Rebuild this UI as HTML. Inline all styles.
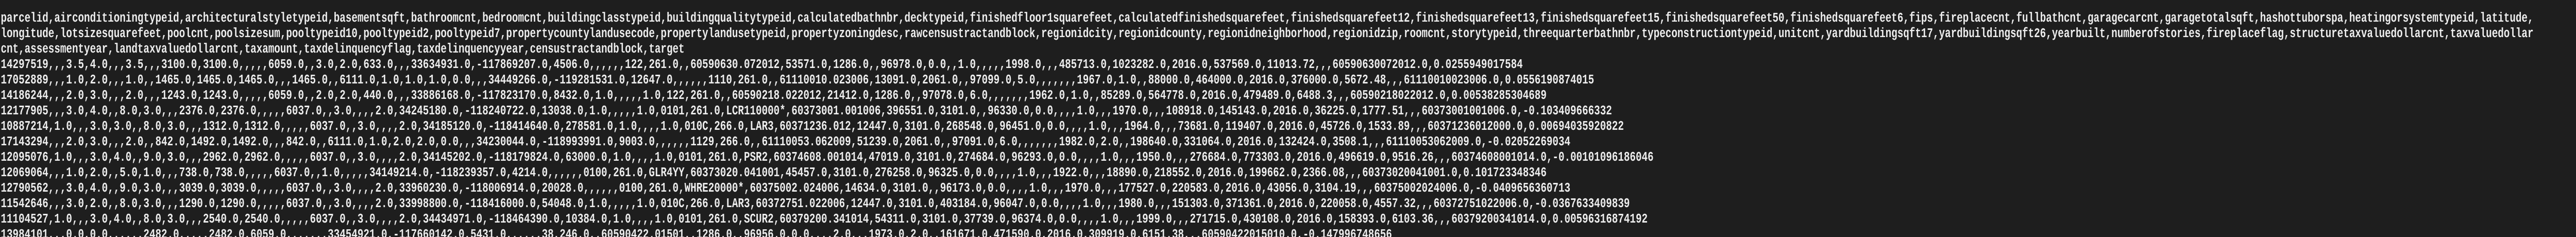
<!DOCTYPE html>
<html><head><meta charset="utf-8"><style>
html,body{margin:0;padding:0;background:#1e1e1e;overflow:hidden;}
body{width:6666px;height:460px;overflow:hidden;position:relative;}
svg{display:block;position:absolute;left:0;top:0;transform:scaleX(0.74);transform-origin:0 0;}
text{font-family:"Liberation Mono","DejaVu Sans Mono",monospace;font-size:26px;font-weight:bold;fill:#eeeeee;}
</style></head><body>
<svg width="9000" height="460" viewBox="0 0 9000 460" xmlns="http://www.w3.org/2000/svg">
<text x="2" y="42">parcelid,airconditioningtypeid,architecturalstyletypeid,basementsqft,bathroomcnt,bedroomcnt,buildingclasstypeid,buildingqualitytypeid,calculatedbathnbr,decktypeid,finishedfloor1squarefeet,calculatedfinishedsquarefeet,finishedsquarefeet12,finishedsquarefeet13,finishedsquarefeet15,finishedsquarefeet50,finishedsquarefeet6,fips,fireplacecnt,fullbathcnt,garagecarcnt,garagetotalsqft,hashottuborspa,heatingorsystemtypeid,latitude,</text>
<text x="2" y="72">longitude,lotsizesquarefeet,poolcnt,poolsizesum,pooltypeid10,pooltypeid2,pooltypeid7,propertycountylandusecode,propertylandusetypeid,propertyzoningdesc,rawcensustractandblock,regionidcity,regionidcounty,regionidneighborhood,regionidzip,roomcnt,storytypeid,threequarterbathnbr,typeconstructiontypeid,unitcnt,yardbuildingsqft17,yardbuildingsqft26,yearbuilt,numberofstories,fireplaceflag,structuretaxvaluedollarcnt,taxvaluedollar</text>
<text x="2" y="102">cnt,assessmentyear,landtaxvaluedollarcnt,taxamount,taxdelinquencyflag,taxdelinquencyyear,censustractandblock,target</text>
<text x="2" y="132">14297519,,,3.5,4.0,,,3.5,,,3100.0,3100.0,,,,,6059.0,,3.0,2.0,633.0,,,33634931.0,-117869207.0,4506.0,,,,,,122,261.0,,60590630.072012,53571.0,1286.0,,96978.0,0.0,,1.0,,,,,1998.0,,,485713.0,1023282.0,2016.0,537569.0,11013.72,,,60590630072012.0,0.0255949017584</text>
<text x="2" y="162">17052889,,,1.0,2.0,,,1.0,,1465.0,1465.0,1465.0,,,1465.0,,6111.0,1.0,1.0,1.0,0.0,,,34449266.0,-119281531.0,12647.0,,,,,,1110,261.0,,61110010.023006,13091.0,2061.0,,97099.0,5.0,,,,,,,1967.0,1.0,,88000.0,464000.0,2016.0,376000.0,5672.48,,,61110010023006.0,0.0556190874015</text>
<text x="2" y="192">14186244,,,2.0,3.0,,,2.0,,,1243.0,1243.0,,,,,6059.0,,2.0,2.0,440.0,,,33886168.0,-117823170.0,8432.0,1.0,,,,,1.0,122,261.0,,60590218.022012,21412.0,1286.0,,97078.0,6.0,,,,,,,1962.0,1.0,,85289.0,564778.0,2016.0,479489.0,6488.3,,,60590218022012.0,0.00538285304689</text>
<text x="2" y="222">12177905,,,3.0,4.0,,8.0,3.0,,,2376.0,2376.0,,,,,6037.0,,3.0,,,,2.0,34245180.0,-118240722.0,13038.0,1.0,,,,,1.0,0101,261.0,LCR110000*,60373001.001006,396551.0,3101.0,,96330.0,0.0,,,,1.0,,,1970.0,,,108918.0,145143.0,2016.0,36225.0,1777.51,,,60373001001006.0,-0.103409666332</text>
<text x="2" y="252">10887214,1.0,,,3.0,3.0,,8.0,3.0,,,1312.0,1312.0,,,,,6037.0,,3.0,,,,2.0,34185120.0,-118414640.0,278581.0,1.0,,,,1.0,010C,266.0,LAR3,60371236.012,12447.0,3101.0,268548.0,96451.0,0.0,,,,1.0,,,1964.0,,,73681.0,119407.0,2016.0,45726.0,1533.89,,,60371236012000.0,0.00694035920822</text>
<text x="2" y="282">17143294,,,2.0,3.0,,,2.0,,842.0,1492.0,1492.0,,,842.0,,6111.0,1.0,2.0,2.0,0.0,,,34230044.0,-118993991.0,9003.0,,,,,,1129,266.0,,61110053.062009,51239.0,2061.0,,97091.0,6.0,,,,,,,1982.0,2.0,,198640.0,331064.0,2016.0,132424.0,3508.1,,,61110053062009.0,-0.02052269034</text>
<text x="2" y="312">12095076,1.0,,,3.0,4.0,,9.0,3.0,,,2962.0,2962.0,,,,,6037.0,,3.0,,,,2.0,34145202.0,-118179824.0,63000.0,1.0,,,,1.0,0101,261.0,PSR2,60374608.001014,47019.0,3101.0,274684.0,96293.0,0.0,,,,1.0,,,1950.0,,,276684.0,773303.0,2016.0,496619.0,9516.26,,,60374608001014.0,-0.00101096186046</text>
<text x="2" y="342">12069064,,,1.0,2.0,,5.0,1.0,,,738.0,738.0,,,,,6037.0,,1.0,,,,,34149214.0,-118239357.0,4214.0,,,,,,0100,261.0,GLR4YY,60373020.041001,45457.0,3101.0,276258.0,96325.0,0.0,,,,1.0,,,1922.0,,,18890.0,218552.0,2016.0,199662.0,2366.08,,,60373020041001.0,0.101723348346</text>
<text x="2" y="372">12790562,,,3.0,4.0,,9.0,3.0,,,3039.0,3039.0,,,,,6037.0,,3.0,,,,2.0,33960230.0,-118006914.0,20028.0,,,,,,0100,261.0,WHRE20000*,60375002.024006,14634.0,3101.0,,96173.0,0.0,,,,1.0,,,1970.0,,,177527.0,220583.0,2016.0,43056.0,3104.19,,,60375002024006.0,-0.0409656360713</text>
<text x="2" y="402">11542646,,,3.0,2.0,,8.0,3.0,,,1290.0,1290.0,,,,,6037.0,,3.0,,,,2.0,33998800.0,-118416000.0,54048.0,1.0,,,,,1.0,010C,266.0,LAR3,60372751.022006,12447.0,3101.0,403184.0,96047.0,0.0,,,,1.0,,,1980.0,,,151303.0,371361.0,2016.0,220058.0,4557.32,,,60372751022006.0,-0.0367633409839</text>
<text x="2" y="432">11104527,1.0,,,3.0,4.0,,8.0,3.0,,,2540.0,2540.0,,,,,6037.0,,3.0,,,,2.0,34434971.0,-118464390.0,10384.0,1.0,,,,1.0,0101,261.0,SCUR2,60379200.341014,54311.0,3101.0,37739.0,96374.0,0.0,,,,1.0,,,1999.0,,,271715.0,430108.0,2016.0,158393.0,6103.36,,,60379200341014.0,0.00596316874192</text>
<text x="2" y="462">13984101,,,0.0,0.0,,,,,,2482.0,,,,,2482.0,6059.0,,,,,,,33454921.0,-117660142.0,5431.0,,,,,,38,246.0,,60590422.01501,,1286.0,,96956.0,0.0,,,,2.0,,,1973.0,2.0,,161671.0,471590.0,2016.0,309919.0,6151.38,,,60590422015010.0,-0.147996748656</text>
</svg>
</body></html>
